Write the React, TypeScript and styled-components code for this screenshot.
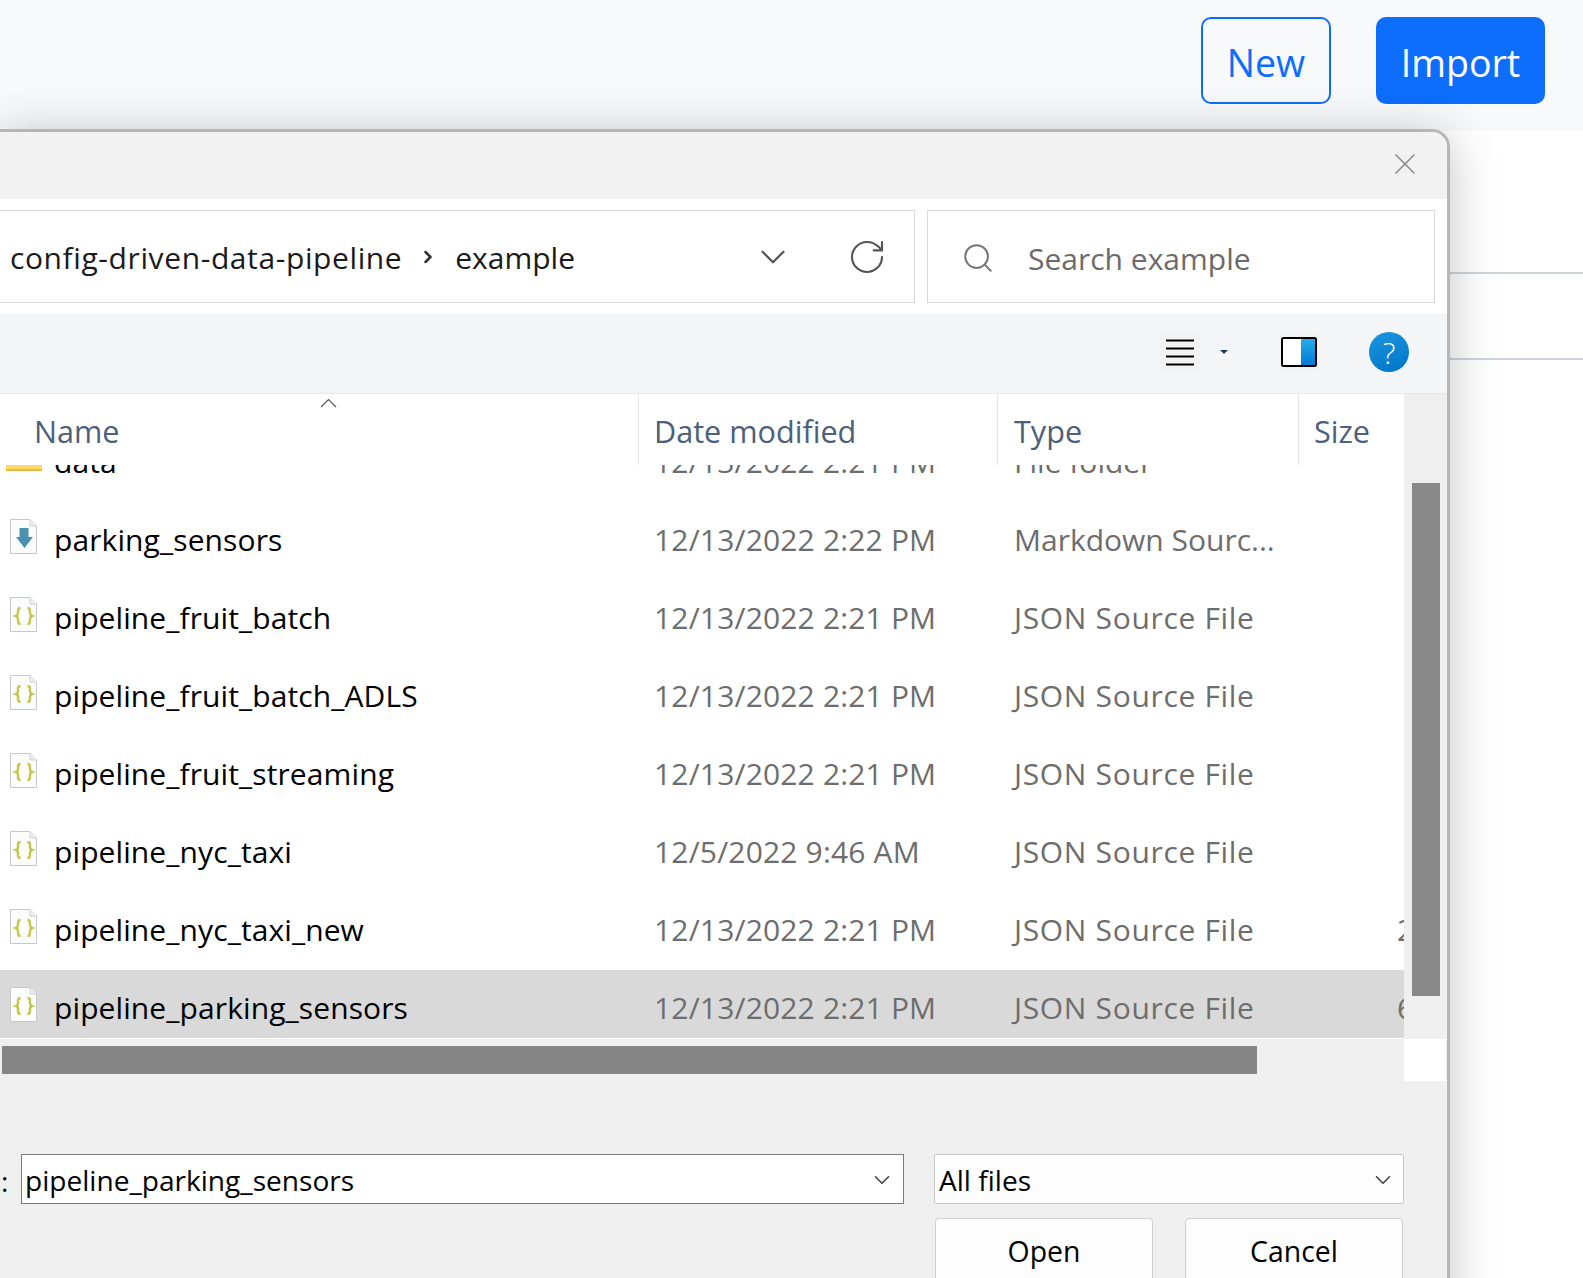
import React from 'react'
import styled, { createGlobalStyle } from 'styled-components'
import { ChevronDown, ChevronRight, RotateCw, Search, X } from 'lucide-react'

const GlobalStyle = createGlobalStyle`
    html, body {
        margin: 0;
        padding: 0;
        background: #fff;
        font-family: 'Open Sans', 'Liberation Sans', sans-serif;
    }
    * {
        box-sizing: border-box;
    }
`

const Page = styled.div`
    position: relative;
    width: 1583px;
    height: 1278px;
    overflow: hidden;
    background: #fff;
`

const TopBar = styled.header`
    display: flex;
    justify-content: flex-end;
    gap: 45px;
    height: 131px;
    padding: 17px 38px 0 0;
    background: #f8f9fa;
`

const PageButton = styled.button<{ $primary?: boolean }>`
    height: 87px;
    width: ${(p) => (p.$primary ? '169px' : '130px')};
    padding: 3px 0 0;
    border: 2px solid #0d6efd;
    border-radius: 10px;
    font-family: inherit;
    font-size: 37.5px;
    background: ${(p) => (p.$primary ? '#0d6efd' : 'transparent')};
    color: ${(p) => (p.$primary ? '#fff' : '#0d6efd')};
`

const BackgroundTable = styled.div`
    padding-top: 58px;
`

const BackgroundRule = styled.div<{ $height: number }>`
    height: ${(p) => p.$height}px;
    border-bottom: 2px solid #ced4da;
`

const Dialog = styled.section`
    position: absolute;
    top: 129px;
    left: -3px;
    width: 1453px;
    height: 1200px;
    display: flex;
    flex-direction: column;
    border: 3px solid #b6b6b6;
    border-radius: 0 18px 0 0;
    background: #efefef;
    box-shadow: 0 6px 50px rgba(0, 0, 0, 0.24);
    overflow: hidden;
`

const TitleBar = styled.div`
    height: 67px;
    flex: none;
    display: flex;
    align-items: center;
    justify-content: flex-end;
    padding: 0 24px 4px 0;
    background: #f2f2f2;
    color: #8c8c8c;
`

const AddressRow = styled.div`
    height: 115px;
    flex: none;
    display: flex;
    gap: 12px;
    padding: 11px 12px 11px 0;
    background: #fff;
`

const AddressBox = styled.div`
    width: 915px;
    display: flex;
    align-items: center;
    padding: 0 27px 0 10px;
    border: 1px solid #d9d9d9;
    border-left: none;
    font-size: 30px;
    color: #1a1a1a;
`

const Crumb = styled.span<{ $tracking?: number }>`
    padding-top: 2px;
    white-space: nowrap;
    letter-spacing: ${(p) => p.$tracking ?? 0}px;
`

const CrumbSeparator = styled.span`
    display: flex;
    margin: 0 17px 0 16px;
    color: #333;
`

const AddressActions = styled.div`
    margin-left: auto;
    display: flex;
    align-items: center;
    gap: 53px;
    color: #555;
`

const SearchBox = styled.div`
    flex: 1;
    display: flex;
    align-items: center;
    gap: 33px;
    padding: 3px 0 0 33px;
    border: 1px solid #d9d9d9;
    font-size: 30px;
    color: #6b6b6b;
`

const Toolbar = styled.div`
    height: 80px;
    flex: none;
    display: flex;
    align-items: center;
    justify-content: flex-end;
    padding: 0 38px 3px 0;
    background: #f4f5f7;
    border-bottom: 1px solid #e8e8e8;
`

const IconTile = styled.div<{ $left?: number }>`
    width: 40px;
    height: 40px;
    margin-left: ${(p) => p.$left ?? 0}px;
    display: flex;
    align-items: center;
    justify-content: center;
    border-radius: 4px;
    background: #f2f2f2;
`

const CaretSlot = styled.div`
    width: 48px;
    display: flex;
    justify-content: center;
`

const Caret = styled.div`
    border-left: 4px solid transparent;
    border-right: 4px solid transparent;
    border-top: 4px solid #1e3a5f;
`

const HelpBadge = styled.div`
    width: 40px;
    height: 40px;
    margin-left: 50px;
    display: flex;
    align-items: center;
    justify-content: center;
    border-radius: 50%;
    background: linear-gradient(160deg, #1b95e0, #0074c8);
    color: #fff;
    font-size: 30px;
    font-weight: 300;
`

const ListPane = styled.div`
    flex: none;
    display: grid;
    grid-template-columns: 1404px 42px;
    grid-template-rows: 645px 42px;
`

const Table = styled.div`
    display: flex;
    flex-direction: column;
    background: #fff;
    overflow: hidden;
    border-bottom: 1px solid #fff;
`

const HeaderRow = styled.div`
    position: relative;
    height: 71px;
    flex: none;
    display: grid;
    grid-template-columns: 639px 359px 301px 1fr;
    background: #fff;
    z-index: 1;
`

const HeaderCell = styled.div<{ $pad: number; $divider?: boolean }>`
    display: flex;
    align-items: center;
    padding: 3px 0 0 ${(p) => p.$pad}px;
    border-right: ${(p) => (p.$divider ? '1px solid #e5e5e5' : 'none')};
    font-size: 30.6px;
    color: #4c607a;
`

const SortMark = styled.svg`
    position: absolute;
    top: 4px;
    left: 320px;
`

const RowViewport = styled.div`
    flex: 1;
    overflow: hidden;
`

const RowList = styled.div`
    display: flex;
    flex-direction: column;
    gap: 10px;
    margin-top: -41px;
`

const Row = styled.div<{ $selected?: boolean }>`
    position: relative;
    height: 68px;
    flex: none;
    display: grid;
    grid-template-columns: 54px 600px 360px 383px 1fr;
    align-items: center;
    overflow: hidden;
    font-size: 30px;
    color: #6d6d6d;
    background: ${(p) => (p.$selected ? '#d9d9d9' : '#fff')};
`

const IconCell = styled.div<{ $left: number }>`
    padding-left: ${(p) => p.$left}px;
    display: flex;
`

const NameCell = styled.div`
    color: #000;
    white-space: nowrap;
    padding-top: 7px;
    letter-spacing: 0.1px;
`

const DetailCell = styled.div<{ $tracking?: number }>`
    white-space: nowrap;
    padding-top: 7px;
    letter-spacing: ${(p) => p.$tracking ?? 0}px;
`

const VerticalTrack = styled.div`
    padding: 89px 0 0 8px;
    background: #efefef;
`

const VerticalThumb = styled.div`
    width: 28px;
    height: 513px;
    background: #888;
`

const HorizontalTrack = styled.div`
    padding: 7px 0 0 2px;
    background: #efefef;
`

const HorizontalThumb = styled.div`
    width: 1255px;
    height: 28px;
    background: #868686;
`

const ScrollCorner = styled.div`
    background: #fff;
`

const Footer = styled.div`
    flex: 1;
    padding-top: 73px;
    background: #efefef;
    font-size: 28.1px;
`

const FieldRow = styled.div`
    display: flex;
    height: 50px;
    color: #000;
`

const FieldLabel = styled.span`
    width: 21px;
    padding: 2px 0 0 1px;
    line-height: 50px;
`

const FileNameField = styled.div`
    width: 883px;
    display: flex;
    align-items: center;
    justify-content: space-between;
    padding: 2px 8px 0 3px;
    border: 1px solid #7a7a7a;
    background: #fff;
`

const FilterField = styled.div`
    width: 470px;
    margin-left: 30px;
    display: flex;
    align-items: center;
    justify-content: space-between;
    padding: 1px 7px 0 4px;
    border: 1px solid #c8c8c8;
    border-radius: 2px;
    background: #fdfdfd;
`

const ButtonRow = styled.div`
    display: flex;
    gap: 32px;
    margin: 14px 0 0 935px;
`

const DialogButton = styled.button`
    width: 218px;
    height: 70px;
    padding: 0 0 4px;
    border: 1px solid #cfcfcf;
    border-radius: 4px;
    background: #fdfdfd;
    font-family: inherit;
    font-size: 28.4px;
    color: #000;
`

const FolderIcon = () => (
    <svg width="36" height="26" viewBox="0 0 36 26">
        <rect x="0" y="0" width="36" height="24" fill="#ffd766" />
        <rect x="0" y="24" width="36" height="2" fill="#f2b53a" />
    </svg>
)

const PageShape = () => (
    <>
        <path d="M0.5 0.5H20L26.5 7V34.5H0.5Z" fill="#fbfcfc" stroke="#c8c8c8" />
        <path d="M20 0.5V7H26.5" fill="#eee" stroke="#d0d0d0" />
    </>
)

const JsonFileIcon = () => (
    <svg width="27" height="35" viewBox="0 0 27 35">
        <PageShape />
        <path
            d="M10.500 11c-2 0-2.500 1-2.500 3v2c0 1.600-.6 2.500-2 3 1.400.5 2 1.400 2 3v2c0 2 .5 3 2.500 3M17.500 11c2 0 2.500 1 2.500 3v2c0 1.600.6 2.500 2 3-1.400.5-2 1.400-2 3v2c0 2-.5 3-2.500 3"
            fill="none"
            stroke="#c5c64c"
            strokeWidth="2.400"
        />
    </svg>
)

const MarkdownFileIcon = () => (
    <svg width="27" height="35" viewBox="0 0 27 35">
        <PageShape />
        <path d="M9.500 9H18.500V18H23L14.500 29L6 18H9.500Z" fill="#4a90b0" />
    </svg>
)

const ListViewIcon = () => (
    <svg width="28" height="28" viewBox="0 0 28 28">
        <path d="M0 2.500H28M0 10.500H28M0 18.500H28M0 26.500H28" stroke="#000" strokeWidth="2" />
    </svg>
)

const PreviewPaneIcon = () => (
    <svg width="36" height="30" viewBox="0 0 36 30">
        <defs>
            <linearGradient id="paneFill" x1="0" y1="0" x2="0" y2="1">
                <stop offset="0" stopColor="#27aeea" />
                <stop offset="1" stopColor="#0078d4" />
            </linearGradient>
        </defs>
        <rect x="1" y="1" width="34" height="28" rx="1.500" fill="#fff" />
        <rect x="20" y="1" width="15" height="28" fill="url(#paneFill)" />
        <rect x="1" y="1" width="34" height="28" rx="1.500" fill="none" stroke="#000" strokeWidth="2" />
    </svg>
)

interface FileRow {
    name: string
    date: string
    type: string
    size?: string
    kind: 'folder' | 'markdown' | 'json'
    selected?: boolean
}

const files: FileRow[] = [
    { name: 'data', date: '12/13/2022 2:21 PM', type: 'File folder', kind: 'folder' },
    { name: 'parking_sensors', date: '12/13/2022 2:22 PM', type: 'Markdown Sourc...', kind: 'markdown' },
    { name: 'pipeline_fruit_batch', date: '12/13/2022 2:21 PM', type: 'JSON Source File', kind: 'json' },
    { name: 'pipeline_fruit_batch_ADLS', date: '12/13/2022 2:21 PM', type: 'JSON Source File', kind: 'json' },
    { name: 'pipeline_fruit_streaming', date: '12/13/2022 2:21 PM', type: 'JSON Source File', kind: 'json' },
    { name: 'pipeline_nyc_taxi', date: '12/5/2022 9:46 AM', type: 'JSON Source File', kind: 'json' },
    { name: 'pipeline_nyc_taxi_new', date: '12/13/2022 2:21 PM', type: 'JSON Source File', size: '2 KB', kind: 'json' },
    { name: 'pipeline_parking_sensors', date: '12/13/2022 2:21 PM', type: 'JSON Source File', size: '6 KB', kind: 'json', selected: true }
]

const fileIcon = (kind: FileRow['kind']) => {
    if (kind === 'folder') return <FolderIcon />
    if (kind === 'markdown') return <MarkdownFileIcon />
    return <JsonFileIcon />
}

const App: React.FC = () => (
    <Page>
        <GlobalStyle />
        <TopBar>
            <PageButton>New</PageButton>
            <PageButton $primary>Import</PageButton>
        </TopBar>
        <BackgroundTable>
            <BackgroundRule $height={85} />
            <BackgroundRule $height={86} />
        </BackgroundTable>

        <Dialog>
            <TitleBar>
                <X size={36} strokeWidth={1.1} />
            </TitleBar>
            <AddressRow>
                <AddressBox>
                    <Crumb $tracking={0.6}>config-driven-data-pipeline</Crumb>
                    <CrumbSeparator>
                        <ChevronRight size={20} strokeWidth={3} />
                    </CrumbSeparator>
                    <Crumb>example</Crumb>
                    <AddressActions>
                        <ChevronDown size={42} strokeWidth={1.3} />
                        <RotateCw size={40} strokeWidth={1.3} />
                    </AddressActions>
                </AddressBox>
                <SearchBox>
                    <Search size={34} strokeWidth={1.4} color="#777" />
                    Search example
                </SearchBox>
            </AddressRow>
            <Toolbar>
                <IconTile>
                    <ListViewIcon />
                </IconTile>
                <CaretSlot>
                    <Caret />
                </CaretSlot>
                <IconTile $left={31}>
                    <PreviewPaneIcon />
                </IconTile>
                <HelpBadge>?</HelpBadge>
            </Toolbar>
            <ListPane>
                <Table>
                    <HeaderRow>
                        <HeaderCell $pad={34} $divider>Name</HeaderCell>
                        <HeaderCell $pad={15} $divider>Date modified</HeaderCell>
                        <HeaderCell $pad={16} $divider>Type</HeaderCell>
                        <HeaderCell $pad={15}>Size</HeaderCell>
                        <SortMark width="17" height="10" viewBox="0 0 17 10">
                            <path d="M1 9L8.500 1.500L16 9" fill="none" stroke="#555" strokeWidth="1.200" />
                        </SortMark>
                    </HeaderRow>
                    <RowViewport>
                        <RowList>
                            {files.map((file) => (
                                <Row key={file.name} $selected={file.selected}>
                                    <IconCell $left={file.kind === 'folder' ? 6 : 10}>{fileIcon(file.kind)}</IconCell>
                                    <NameCell>{file.name}</NameCell>
                                    <DetailCell $tracking={0.17}>{file.date}</DetailCell>
                                    <DetailCell $tracking={file.kind === 'json' ? 0.67 : 0}>{file.type}</DetailCell>
                                    <DetailCell>{file.size}</DetailCell>
                                </Row>
                            ))}
                        </RowList>
                    </RowViewport>
                </Table>
                <VerticalTrack>
                    <VerticalThumb />
                </VerticalTrack>
                <HorizontalTrack>
                    <HorizontalThumb />
                </HorizontalTrack>
                <ScrollCorner />
            </ListPane>
            <Footer>
                <FieldRow>
                    <FieldLabel>:</FieldLabel>
                    <FileNameField>
                        pipeline_parking_sensors
                        <ChevronDown size={26} strokeWidth={1.5} color="#444" />
                    </FileNameField>
                    <FilterField>
                        All files
                        <ChevronDown size={26} strokeWidth={1.5} color="#444" />
                    </FilterField>
                </FieldRow>
                <ButtonRow>
                    <DialogButton>Open</DialogButton>
                    <DialogButton>Cancel</DialogButton>
                </ButtonRow>
            </Footer>
        </Dialog>
    </Page>
)

export default App
